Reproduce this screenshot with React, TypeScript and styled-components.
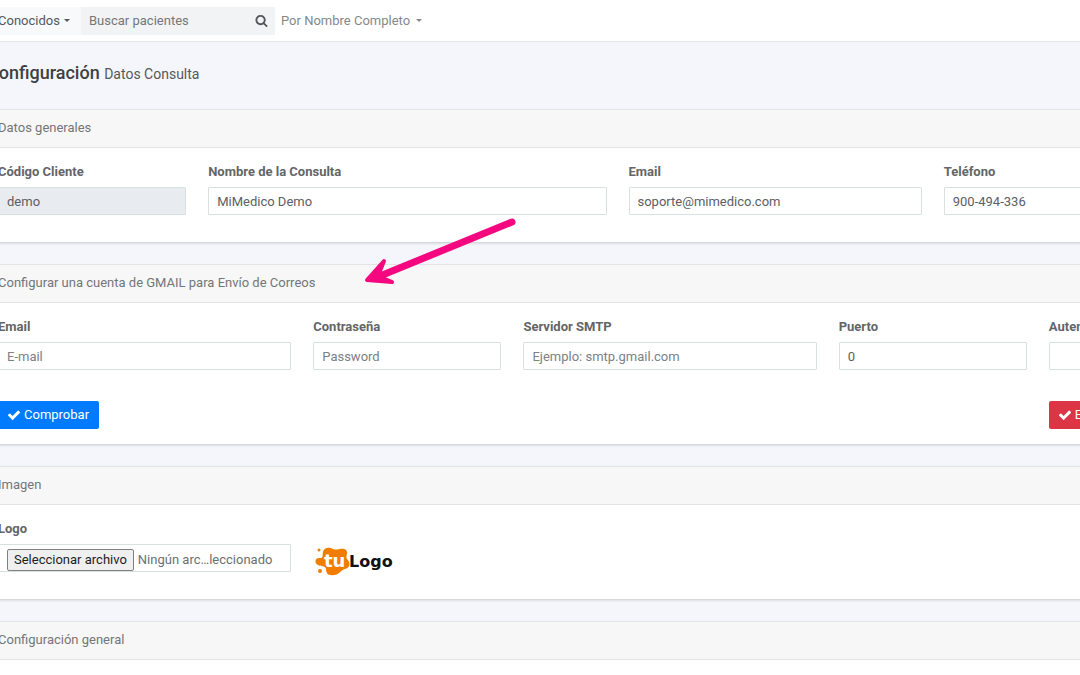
import React from "react";
import styled, { createGlobalStyle, css } from "styled-components";

const GlobalStyle = createGlobalStyle`
  *, *::before, *::after { box-sizing: border-box; }
  body {
    margin: 0;
    background: #f4f6fb;
    color: #636568;
    font-family: Roboto, "Liberation Sans", sans-serif;
    font-size: 13px;
    line-height: 20px;
    overflow-x: hidden;
  }
  button, input { font: inherit; }
`;

const Shell = styled.div`
  position: relative;
  display: flex;
  flex-direction: column;
  min-height: 100vh;
  overflow: hidden;
`;

const TopBar = styled.header`
  display: flex;
  align-items: center;
  height: 42px;
  margin-left: -2px;
  background: #fff;
  border-bottom: 1px solid #e4e7ea;
`;

const MenuButton = styled.button<{ $filled?: boolean }>`
  display: flex;
  align-items: center;
  gap: ${(p) => (p.$filled ? 4 : 6)}px;
  height: 28px;
  min-width: 83px;
  padding: 0;
  border: 0;
  white-space: nowrap;
  background: ${(p) => (p.$filled ? "#f8f9fb" : "transparent")};
  color: ${(p) => (p.$filled ? "#55585b" : "#85888b")};

  &::after {
    content: "";
    border-top: 3px solid currentColor;
    border-left: 3px solid transparent;
    border-right: 3px solid transparent;
  }
`;

const SearchForm = styled.form`
  display: flex;
  align-items: center;
  width: 194px;
  height: 28px;
  margin-right: 6px;
  background: #f2f3f5;
`;

const SearchInput = styled.input`
  flex: 1;
  min-width: 0;
  height: 100%;
  padding: 0 8px;
  border: 0;
  background: transparent;
  color: #636568;

  &::placeholder { color: #74777a; opacity: 1; }
`;

const SearchButton = styled.button`
  display: flex;
  padding: 7px;
  border: 0;
  background: transparent;
  color: #55585b;
`;

/* The content area is wider than the window and runs off both of its sides. */
const Content = styled.main`
  display: flex;
  flex: 1;
  flex-direction: column;
  gap: 21px;
  margin: 0 -168px 0 -13px;
`;

const Title = styled.h1`
  margin: 0 0 3px;
  padding-top: 20px;
  font-size: 18px;
  font-weight: 500;
  line-height: 22px;
  color: #3e4043;
`;

const Subtitle = styled.small`
  font-size: 14px;
  font-weight: 400;
  color: #55585b;
`;

const Panel = styled.section<{ $fill?: boolean }>`
  flex: ${(p) => (p.$fill ? 1 : "none")};
  background: #fff;
  border: 1px solid #e2e5e5;
  border-bottom: ${(p) => (p.$fill ? "0" : "1px solid #d5d8da")};
  box-shadow: 0 1px 2px rgba(0, 0, 0, 0.1);
`;

const PanelTitle = styled.h2`
  margin: 0;
  padding: 8px 10px 9px;
  border-bottom: 1px solid #e2e4e4;
  background: #f7f7f7;
  font-size: 13px;
  font-weight: 400;
  line-height: 20px;
  color: #737679;
`;

const PanelBody = styled.div`
  padding: 14px 10px 15px;
`;

const Grid = styled.div`
  display: grid;
  grid-template-columns: repeat(12, minmax(0, 1fr));
  column-gap: 22px;
`;

const Cell = styled.div<{ $span: number }>`
  grid-column: span ${(p) => p.$span};
  margin-bottom: 12px;
`;

const Label = styled.label`
  display: block;
  margin-bottom: 5px;
  font-weight: 700;
  white-space: nowrap;
`;

const control = css`
  display: block;
  width: 100%;
  height: 28px;
  padding: 0 8px;
  border: 1px solid #d9e0e2;
  border-radius: 1px;
  background: #fff;
  color: #5c6063;
`;

const Input = styled.input`
  ${control}
  &::placeholder { color: #7a8187; opacity: 1; }
  &:disabled { background: #e8ebef; }
`;

const HiddenFile = styled.input`
  position: absolute;
  width: 1px;
  height: 1px;
  opacity: 0;
`;

const FileBox = styled.label`
  ${control}
  display: flex;
  align-items: flex-end;
  gap: 4px;
  white-space: nowrap;
`;

const FileButton = styled.span`
  padding: 0 6px;
  border: 1px solid #808080;
  border-radius: 2px;
  background: #efefef;
  color: #1d1d1d;
`;

const FileName = styled.span`
  padding-bottom: 1px;
  color: #6c6f72;
`;

const Actions = styled(Grid)`
  margin-top: 19px;
`;

const ActionButton = styled.button<{ $tone: "primary" | "danger"; $start: number }>`
  grid-column: ${(p) => p.$start} / span 2;
  justify-self: start;
  display: flex;
  align-items: center;
  gap: 3px;
  height: 28px;
  padding: 0 10px 0 9px;
  border: 0;
  border-radius: 2px;
  background: ${(p) => (p.$tone === "primary" ? "#007bff" : "#dc3545")};
  color: #fff;
  white-space: nowrap;
`;

const Icon = styled.svg`
  display: block;
  fill: currentColor;
`;

const LogoCell = styled.div`
  grid-column: span 2;
  padding: 27px 2px 0;
`;

const LogoArt = styled.svg`
  display: block;
  overflow: visible;
`;

const Arrow = styled.svg`
  position: absolute;
  left: 360px;
  top: 214px;
  pointer-events: none;
`;

function CheckIcon() {
  return (
    <Icon width="14" height="14" viewBox="0 0 1792 1792" aria-hidden="true">
      <path d="M1671 566q0 40-28 68l-724 724-136 136q-28 28-68 28t-68-28l-136-136-362-362q-28-28-28-68t28-68l136-136q28-28 68-28t68 28l294 295 656-657q28-28 68-28t68 28l136 136q28 28 28 68z" />
    </Icon>
  );
}

function SearchIcon() {
  return (
    <Icon width="13" height="13" viewBox="0 0 1792 1792" aria-hidden="true">
      <path d="M1216 832q0-185-131.5-316.5t-316.5-131.5-316.5 131.5-131.5 316.5 131.5 316.5 316.5 131.5 316.5-131.5 131.5-316.5zm512 832q0 52-38 90t-90 38q-54 0-90-38l-343-342q-179 124-399 124-143 0-273.5-55.5t-225-150-150-225-55.5-273.5 55.5-273.5 150-225 225-150 273.5-55.5 273.5 55.5 225 150 150 225 55.5 273.5q0 220-124 399l343 343q37 37 37 90z" />
    </Icon>
  );
}

type FieldProps = {
  id: string;
  label: string;
  span: number;
  value?: string;
  placeholder?: string;
  type?: string;
  disabled?: boolean;
};

function Field({ id, label, span, value, ...rest }: FieldProps) {
  return (
    <Cell $span={span}>
      <Label htmlFor={id}>{label}</Label>
      <Input id={id} defaultValue={value} {...rest} />
    </Cell>
  );
}

function Logo() {
  return (
    <LogoArt width="80" height="32" viewBox="0 0 80 32" role="img" aria-label="tu Logo">
      <g fill="#f07d00">
        <path d="M8 6C9 1 15 1 18 3C22 5 27 1 31 4C34 7 30 10 32 13C36 17 35 22 30 23C26 24 24 29 19 29C13 30 11 27 11 23C10 19 6 21 3 19C-1 17 0 12 4 12C9 12 7 10 8 6Z" />
        <circle cx="4" cy="4" r="1.5" />
        <circle cx="5" cy="25" r="2" />
      </g>
      <text x="9" y="21" fill="#fff" fontFamily="DejaVu Sans, sans-serif" fontSize="18" fontWeight="700">tu</text>
      <text x="34" y="21" fill="#111" fontFamily="DejaVu Sans, sans-serif" fontSize="16" fontWeight="700">Logo</text>
    </LogoArt>
  );
}

export default function App() {
  return (
    <>
      <GlobalStyle />
      <Shell>
        <TopBar>
          <MenuButton type="button" $filled>Conocidos</MenuButton>
          <SearchForm role="search">
            <SearchInput type="text" aria-label="Buscar pacientes" placeholder="Buscar pacientes" />
            <SearchButton type="button" aria-label="Buscar"><SearchIcon /></SearchButton>
          </SearchForm>
          <MenuButton type="button">Por Nombre Completo</MenuButton>
        </TopBar>

        <Content>
          <Title>Configuración <Subtitle>Datos Consulta</Subtitle></Title>

          <Panel>
            <PanelTitle>Datos generales</PanelTitle>
            <PanelBody>
              <Grid>
                <Field id="codigo" label="Código Cliente" span={2} value="demo" disabled />
                <Field id="nombre" label="Nombre de la Consulta" span={4} value="MiMedico Demo" />
                <Field id="email" label="Email" span={3} value="soporte@mimedico.com" />
                <Field id="telefono" label="Teléfono" span={3} value="900-494-336" />
              </Grid>
            </PanelBody>
          </Panel>

          <Panel>
            <PanelTitle>Configurar una cuenta de GMAIL para Envío de Correos</PanelTitle>
            <PanelBody>
              <Grid>
                <Field id="smtp-email" label="Email" span={3} placeholder="E-mail" />
                <Field id="smtp-clave" label="Contraseña" span={2} type="password" placeholder="Password" />
                <Field id="smtp-servidor" label="Servidor SMTP" span={3} placeholder="Ejemplo: smtp.gmail.com" />
                <Field id="smtp-puerto" label="Puerto" span={2} value="0" />
                <Field id="smtp-auth" label="Autenticación" span={2} />
              </Grid>
              <Actions>
                <ActionButton type="button" $tone="primary" $start={1}><CheckIcon />Comprobar</ActionButton>
                <ActionButton type="button" $tone="danger" $start={11}><CheckIcon />Eliminar</ActionButton>
              </Actions>
            </PanelBody>
          </Panel>

          <Panel>
            <PanelTitle>Imagen</PanelTitle>
            <PanelBody>
              <Grid>
                <Cell $span={3}>
                  <Label htmlFor="logo">Logo</Label>
                  <HiddenFile id="logo" type="file" />
                  <FileBox htmlFor="logo">
                    <FileButton>Seleccionar archivo</FileButton>
                    <FileName>Ningún arc…leccionado</FileName>
                  </FileBox>
                </Cell>
                <LogoCell><Logo /></LogoCell>
              </Grid>
            </PanelBody>
          </Panel>

          <Panel $fill>
            <PanelTitle>Configuración general</PanelTitle>
          </Panel>
        </Content>

        <Arrow width="160" height="76" viewBox="0 0 160 76" aria-hidden="true">
          <path d="M152 8L20 62" fill="none" stroke="#f5087f" strokeWidth="7" strokeLinecap="round" />
          <path d="M24 47L7 66L32 68L18 62Z" fill="#f5087f" stroke="#f5087f" strokeWidth="4" strokeLinejoin="round" />
        </Arrow>
      </Shell>
    </>
  );
}
